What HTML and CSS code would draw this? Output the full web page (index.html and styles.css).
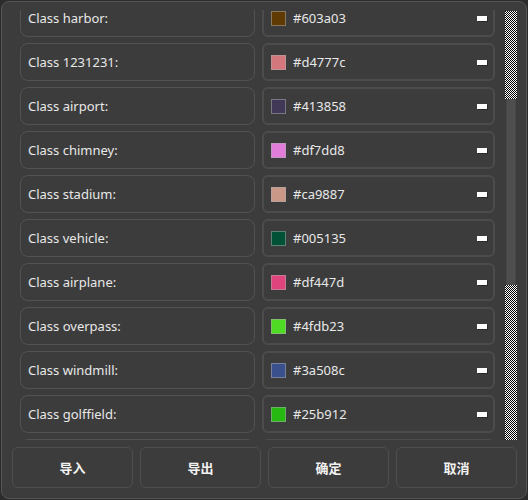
FILE: index.html
```html
<!DOCTYPE html>
<html>
<head>
<meta charset="utf-8">
<link rel="stylesheet" href="styles.css">
</head>
<body>
<div class="window">
  <div class="main">
    <div class="viewport">
      <div class="list">
        <div class="row"><div class="label">Class harbor:</div><div class="color"><span class="swatch" style="background:#603a03"></span><span class="hex">#603a03</span><span class="minus"></span></div></div>
        <div class="row"><div class="label">Class 1231231:</div><div class="color"><span class="swatch" style="background:#d4777c"></span><span class="hex">#d4777c</span><span class="minus"></span></div></div>
        <div class="row"><div class="label">Class airport:</div><div class="color"><span class="swatch" style="background:#413858"></span><span class="hex">#413858</span><span class="minus"></span></div></div>
        <div class="row"><div class="label">Class chimney:</div><div class="color"><span class="swatch" style="background:#df7dd8"></span><span class="hex">#df7dd8</span><span class="minus"></span></div></div>
        <div class="row"><div class="label">Class stadium:</div><div class="color"><span class="swatch" style="background:#ca9887"></span><span class="hex">#ca9887</span><span class="minus"></span></div></div>
        <div class="row"><div class="label">Class vehicle:</div><div class="color"><span class="swatch" style="background:#005135"></span><span class="hex">#005135</span><span class="minus"></span></div></div>
        <div class="row"><div class="label">Class airplane:</div><div class="color"><span class="swatch" style="background:#df447d"></span><span class="hex">#df447d</span><span class="minus"></span></div></div>
        <div class="row"><div class="label">Class overpass:</div><div class="color"><span class="swatch" style="background:#4fdb23"></span><span class="hex">#4fdb23</span><span class="minus"></span></div></div>
        <div class="row"><div class="label">Class windmill:</div><div class="color"><span class="swatch" style="background:#3a508c"></span><span class="hex">#3a508c</span><span class="minus"></span></div></div>
        <div class="row"><div class="label">Class golffield:</div><div class="color"><span class="swatch" style="background:#25b912"></span><span class="hex">#25b912</span><span class="minus"></span></div></div>
        <div class="row"><div class="label"></div><div class="color"></div></div>
      </div>
    </div>
    <div class="scrollbar">
      <div class="track-top"></div>
      <div class="handle"></div>
      <div class="track-bottom"></div>
    </div>
  </div>
  <div class="buttons">
    <button class="btn">导入</button>
    <button class="btn">导出</button>
    <button class="btn">确定</button>
    <button class="btn">取消</button>
  </div>
</div>
</body>
</html>
```

FILE: styles.css
```css
html, body {
  margin: 0;
  padding: 0;
  background: #2c2c2c;
  width: 528px;
  height: 500px;
  overflow: hidden;
}
.window {
  margin: 1px;
  width: 526px;
  height: 498px;
  box-sizing: border-box;
  border: 1px solid #555555;
  border-radius: 8px;
  background: #3c3c3c;
  font-family: "Noto Sans", "Noto Sans CJK SC", sans-serif;
  font-size: 13px;
  color: #e8e8e8;
  overflow: hidden;
}
.main {
  display: flex;
  margin-top: 8px;
  margin-left: 18px;
  height: 430px;
}
.viewport {
  width: 475px;
  height: 430px;
  overflow: hidden;
}
.list {
  margin-top: -11px;
  display: flex;
  flex-direction: column;
  gap: 6px;
}
.row {
  display: grid;
  grid-template-columns: 235px 233px;
  column-gap: 7px;
  height: 38px;
}
.label {
  box-sizing: border-box;
  border: 1px solid #525252;
  border-radius: 8px;
  display: flex;
  align-items: center;
  padding-left: 7px;
}
.color {
  box-sizing: border-box;
  border: 2px solid #4c4c4c;
  border-radius: 6px;
  display: flex;
  align-items: center;
  padding-left: 7px;
  padding-right: 6px;
}
.swatch {
  width: 15px;
  height: 15px;
  box-sizing: border-box;
  border: 1px solid rgba(170, 170, 170, 0.55);
  margin-right: 7px;
}
.hex {
  flex: 1;
}
.minus {
  width: 10px;
  height: 5px;
  background: #ffffff;
  box-shadow: 1px 1px 0 rgba(0, 0, 0, 0.3);
}
.scrollbar {
  width: 12px;
  margin-left: 10px;
  margin-top: 1px;
  height: 429px;
  display: flex;
  flex-direction: column;
  align-items: center;
}
.track-top, .track-bottom {
  width: 12px;
  background: repeating-conic-gradient(#ffffff 0 25%, #000000 0 50%) 0 0 / 2px 2px;
}
.track-top {
  height: 88px;
}
.handle {
  width: 10px;
  height: 186px;
  background: #4e4e4e;
  border-left: 1px solid #474747;
  border-right: 1px solid #474747;
  box-sizing: border-box;
}
.track-bottom {
  height: 155px;
}
.buttons {
  display: grid;
  grid-template-columns: repeat(4, 121px);
  column-gap: 7px;
  margin-top: 7px;
  margin-left: 10px;
}
.btn {
  height: 41px;
  box-sizing: border-box;
  border: 1px solid #4f4f4f;
  border-radius: 6px;
  background: #3c3c3c;
  color: #f2f2f2;
  font-family: "Noto Sans CJK SC", sans-serif;
  font-size: 13px;
  line-height: 1.2;
  font-weight: bold;
  padding: 0;
}
```
